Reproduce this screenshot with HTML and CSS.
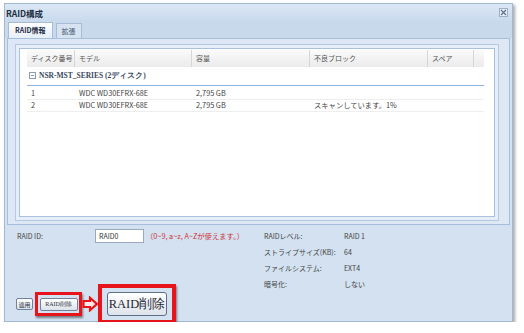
FILE: index.html
```html
<!DOCTYPE html>
<html lang="ja">
<head>
    <meta charset="UTF-8">
    <title>RAID構成</title>
    <link rel="stylesheet" href="styles.css">
</head>
<body>
    <div class="window">
        <div class="title-bar">
            <span class="title">RAID構成</span>
            <span class="close-btn">
                <svg width="7" height="7" viewBox="0 0 7 7"><path d="M1 1L6 6M6 1L1 6" stroke="#5a6f8c" stroke-width="1.2"/></svg>
            </span>
        </div>
        <div class="tabs">
            <div class="tab active">RAID情報</div>
            <div class="tab">拡張</div>
        </div>
        <div class="tab-panel">
            <div class="grid-frame">
                <div class="grid-body">
                    <div class="grid">
                        <div class="grid-head">
                            <div class="cell">ディスク番号</div>
                            <div class="cell">モデル</div>
                            <div class="cell">容量</div>
                            <div class="cell">不良ブロック</div>
                            <div class="cell">スペア</div>
                            <div class="cell"></div>
                        </div>
                        <div class="group-row">
                            <span class="toggle"></span>
                            <span>NSR-MST_SERIES (2ディスク)</span>
                        </div>
                        <div class="rows">
                            <div class="grid-row">
                                <div class="cell">1</div>
                                <div class="cell">WDC WD30EFRX-68E</div>
                                <div class="cell">2,795 GB</div>
                                <div class="cell"></div>
                                <div class="cell"></div>
                                <div class="cell"></div>
                            </div>
                            <div class="grid-row">
                                <div class="cell">2</div>
                                <div class="cell">WDC WD30EFRX-68E</div>
                                <div class="cell">2,795 GB</div>
                                <div class="cell">スキャンしています。1%</div>
                                <div class="cell"></div>
                                <div class="cell"></div>
                            </div>
                        </div>
                    </div>
                </div>
            </div>
        </div>
        <div class="form">
            <div class="form-left">
                <div class="form-row">
                    <span class="label id-label">RAID ID:</span>
                    <span class="input">RAID0</span>
                    <span class="note">（0~9, a~z, A~Zが使えます。）</span>
                </div>
            </div>
            <div class="form-right">
                <div class="form-row"><span class="label">RAIDレベル:</span><span class="value">RAID 1</span></div>
                <div class="form-row"><span class="label">ストライプサイズ(KB):</span><span class="value">64</span></div>
                <div class="form-row"><span class="label">ファイルシステム:</span><span class="value">EXT4</span></div>
                <div class="form-row"><span class="label">暗号化:</span><span class="value">しない</span></div>
            </div>
        </div>
        <div class="button-row">
            <span class="btn small">適用</span>
            <span class="callout small-box"><span class="btn small delete">RAID削除</span></span>
            <svg class="arrow" width="16" height="16" viewBox="0 0 16 16">
                <path d="M1.5 5H8V1.8L14.8 8L8 14.2V11H1.5Z" fill="#fbe9e9" stroke="#e8141b" stroke-width="2.2" stroke-linejoin="miter"/>
            </svg>
            <span class="callout big-box"><span class="btn big">RAID削除</span></span>
        </div>
    </div>
</body>
</html>
```

FILE: styles.css
```css
body {
    margin: 0;
    background: #ffffff;
    font-family: "Noto Sans CJK JP", "Liberation Sans", sans-serif;
    font-size: 7px;
    color: #333;
}
.window {
    width: 509px;
    height: 319px;
    margin: 3px 0 0 4px;
    box-sizing: border-box;
    border: 1px solid #a3b8d2;
    background: #d3e1f0;
    box-shadow: 2px 2px 3px rgba(0, 0, 0, 0.35);
    display: flex;
    flex-direction: column;
}
.title-bar {
    height: 18px;
    display: flex;
    align-items: center;
    justify-content: space-between;
    padding: 0 4px 0 1px;
    background: linear-gradient(#dbe7f4, #c9d9ec);
}
.title {
    font-weight: bold;
    font-size: 8.5px;
    color: #1f2f45;
}
.close-btn {
    width: 7px;
    height: 7px;
    border: 1px solid #9fb0c6;
    background: #e9eff7;
    display: flex;
}
.tabs {
    height: 16px;
    display: flex;
    align-items: flex-end;
    gap: 3px;
    padding-left: 3px;
    background: #c9d9ec;
}
.tab {
    height: 14px;
    line-height: 14px;
    padding: 0 5px;
    border: 1px solid #a8bcd6;
    border-bottom: none;
    background: #d7e3f1;
    color: #3d4f68;
}
.tab.active {
    height: 15px;
    line-height: 15px;
    padding: 0 6px;
    background: linear-gradient(#ffffff, #e6eef8);
    font-weight: bold;
    color: #1f2f45;
}
.tab-panel {
    height: 188px;
    box-sizing: border-box;
    margin: 0 2px;
    border: 1px solid #a6bfdd;
    background: #dde8f4;
    padding: 5px 10px 3px 7px;
}
.grid-frame {
    height: 100%;
    box-sizing: border-box;
    border: 1px solid #b3c9e4;
    background: #e6eef8;
    padding: 3px;
}
.grid-body {
    height: 100%;
    box-sizing: border-box;
    border: 1px solid #a9c1de;
    background: #ffffff;
    padding: 1px 10px 0 7px;
}
.grid-head, .grid-row {
    display: grid;
    grid-template-columns: 48px 117px 118px 118px 46px 1fr;
}
.grid-head {
    height: 17px;
    background: linear-gradient(#fafafa, #ebebeb);
    color: #555;
}
.grid-head .cell {
    border-right: 1px solid #d6d6d6;
    line-height: 17px;
}
.grid-head .cell:last-child {
    border-right: none;
}
.cell {
    padding-left: 4px;
    white-space: nowrap;
    overflow: hidden;
}
.group-row {
    height: 18px;
    display: flex;
    align-items: center;
    gap: 3px;
    padding-left: 2px;
    border-bottom: 1px solid #8eb1de;
    font-family: "Liberation Serif", serif;
    font-weight: bold;
    font-size: 7.5px;
    color: #3a4a60;
}
.toggle {
    width: 5px;
    height: 5px;
    border: 1px solid #8a9bb3;
    background: linear-gradient(#8a9bb3, #8a9bb3) center / 3px 1px no-repeat;
}
.rows {
    padding-top: 2px;
}
.grid-row {
    height: 11px;
    line-height: 11px;
    border-bottom: 1px solid #eeeeee;
    font-size: 7.3px;
    color: #444;
}
.form {
    display: flex;
    padding: 3px 0 0 12px;
}
.form-left {
    width: 247px;
}
.form-row {
    height: 16px;
    display: flex;
    align-items: center;
}
.label {
    width: 80px;
    color: #444;
}
.id-label {
    width: 78px;
}
.input {
    width: 44px;
    height: 12px;
    line-height: 12px;
    padding-left: 3px;
    border: 1px solid #9aa9bb;
    background: #ffffff;
}
.note {
    margin-left: 2px;
    font-size: 7.3px;
    color: #d0333a;
}
.value {
    color: #444;
}
.button-row {
    margin-top: auto;
    margin-bottom: 5px;
    height: 24px;
    display: flex;
    align-items: center;
    padding-left: 11px;
}
.btn {
    box-sizing: border-box;
    display: flex;
    align-items: center;
    justify-content: center;
    border: 1px solid #6f819b;
    border-radius: 2px;
    background: linear-gradient(#ffffff, #dde3ea);
    color: #2b3442;
}
.btn.small {
    width: 17px;
    height: 12px;
    font-size: 6px;
}
.btn.small.delete {
    width: 38px;
    height: 13px;
    font-family: "Liberation Serif", serif;
}
.callout {
    box-sizing: border-box;
    display: flex;
    align-items: center;
    justify-content: center;
    border: 3px solid #e8141b;
    box-shadow: 1px 2px 2px rgba(0, 0, 0, 0.45);
}
.small-box {
    width: 47px;
    height: 24px;
    margin-left: 2px;
}
.arrow {
    flex: none;
}
.big-box {
    flex: none;
    width: 78px;
    height: 40px;
    border-width: 4px;
}
.btn.big {
    width: 60px;
    height: 24px;
    border: 1px solid #5d6f8a;
    border-radius: 3px;
    font-family: "Liberation Serif", serif;
    font-size: 12.5px;
    color: #1f2733;
}
```
